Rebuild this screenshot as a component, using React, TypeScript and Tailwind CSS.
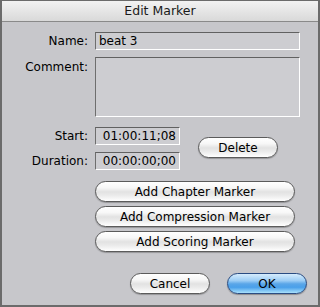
import React from 'react';

const font = "font-['DejaVu_Sans',Verdana,sans-serif]";

const pill =
  'h-[21px] rounded-full border border-[#5b5b5b] text-[12px] text-black bg-[linear-gradient(to_bottom,#ffffff_0%,#f7f7f7_30%,#e2e2e2_52%,#eaeaea_70%,#ffffff_100%)] shadow-[0_1px_1px_rgba(0,0,0,0.25)] flex items-center justify-center';

const field =
  'border border-t-[#616161] border-l-[#6e6e6e] border-b-white border-r-white bg-[#cdcdd1] text-[12px] text-black';

function Label({ children }: { children: React.ReactNode }) {
  return <div className="w-[87px] text-right text-[12px] text-black pr-[1px]">{children}</div>;
}

export default function App() {
  return (
    <div className={`w-[320px] h-[307px] ${font} bg-[#6b6b6b] pl-[2px] pr-[2px] pt-[1px] pb-[2px]`}>
      <div className="w-full h-full flex flex-col bg-[#c7c7cb]">
        {/* Title bar */}
        <div className="h-[21px] shrink-0 flex items-center justify-center border-b border-[#8a8a8a] bg-[linear-gradient(to_bottom,#f2f2f2,#d9d9d9)] text-[12.5px] text-[#1a1a1a]">
          Edit Marker
        </div>

        <div className="flex flex-col pt-[10px]">
          {/* Name */}
          <div className="flex items-center gap-[6px]">
            <Label>Name:</Label>
            <div className={`${field} w-[205px] h-[18px] pl-[3px] flex items-center`}>beat 3</div>
          </div>

          {/* Comment */}
          <div className="flex items-start gap-[6px] mt-[7px]">
            <div className="pt-[1px]">
              <Label>Comment:</Label>
            </div>
            <div className={`${field} w-[205px] h-[60px]`} />
          </div>

          {/* Start / Duration + Delete */}
          <div className="flex items-center mt-[10px]">
            <div className="flex flex-col gap-[7px]">
              <div className="flex items-center gap-[6px]">
                <Label>Start:</Label>
                <div className={`${field} w-[85px] h-[18px] pr-[3px] flex items-center justify-end text-[11px]`}>01:00:11;08</div>
              </div>
              <div className="flex items-center gap-[6px]">
                <Label>Duration:</Label>
                <div className={`${field} w-[85px] h-[18px] pr-[3px] flex items-center justify-end text-[11px]`}>00:00:00;00</div>
              </div>
            </div>
            <button className={`${pill} w-[80px] ml-[18px] -mt-[2px]`}>Delete</button>
          </div>

          {/* Marker buttons */}
          <div className="flex flex-col gap-[4px] ml-[93px] mt-[11px]">
            <button className={`${pill} w-[200px]`}>Add Chapter Marker</button>
            <button className={`${pill} w-[200px]`}>Add Compression Marker</button>
            <button className={`${pill} w-[200px]`}>Add Scoring Marker</button>
          </div>

          {/* Footer */}
          <div className="flex justify-end gap-[17px] pr-[11px] mt-[21px]">
            <button className={`${pill} w-[80px]`}>Cancel</button>
            <button className="h-[21px] w-[80px] rounded-full border border-[#2a4c82] text-[12px] text-black bg-[linear-gradient(to_bottom,#d6ecfc_0%,#9ccdf5_35%,#5aa6e8_52%,#4aa0ea_70%,#a8e0fc_100%)] shadow-[0_1px_1px_rgba(0,0,0,0.3)] flex items-center justify-center">
              OK
            </button>
          </div>
        </div>
      </div>
    </div>
  );
}
